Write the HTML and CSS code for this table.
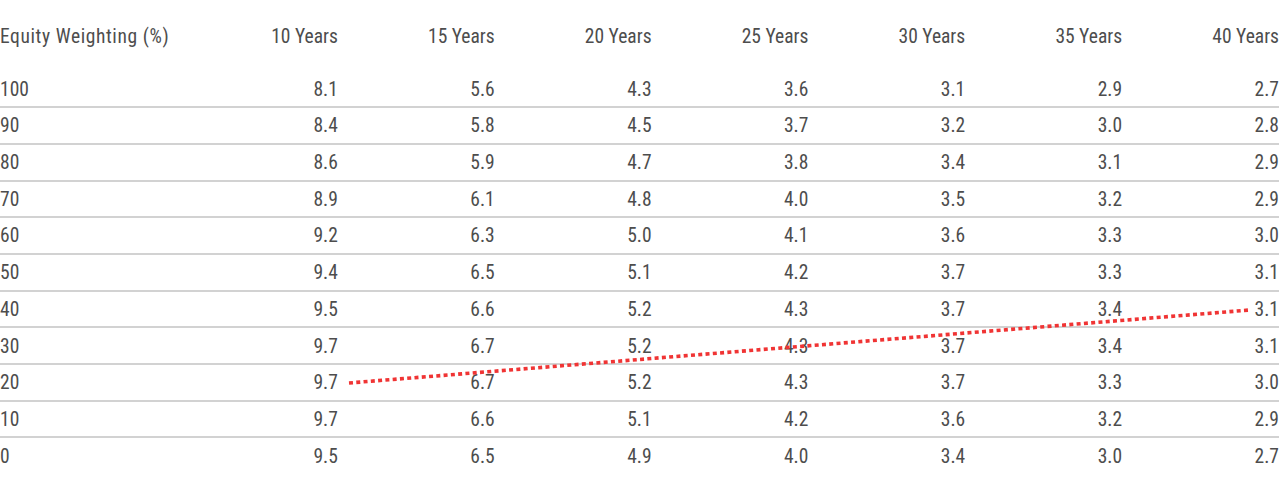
FILE: index.html
```html
<!DOCTYPE html>
<html lang="en">
<head>
<meta charset="utf-8">
<title>Safe withdrawal rates by equity weighting</title>
<link rel="stylesheet" href="styles.css">
</head>
<body>
<div class="wrap">
  <table class="rates">
    <colgroup>
      <col class="c-first">
      <col class="c-num"><col class="c-num"><col class="c-num"><col class="c-num"><col class="c-num"><col class="c-num"><col class="c-num">
    </colgroup>
    <thead>
      <tr>
        <th class="lbl">Equity Weighting (%)</th>
        <th>10 Years</th><th>15 Years</th><th>20 Years</th><th>25 Years</th><th>30 Years</th><th>35 Years</th><th>40 Years</th>
      </tr>
    </thead>
    <tbody>
      <tr><td class="lbl">100</td><td>8.1</td><td>5.6</td><td>4.3</td><td>3.6</td><td>3.1</td><td>2.9</td><td>2.7</td></tr>
      <tr><td class="lbl">90</td><td>8.4</td><td>5.8</td><td>4.5</td><td>3.7</td><td>3.2</td><td>3.0</td><td>2.8</td></tr>
      <tr><td class="lbl">80</td><td>8.6</td><td>5.9</td><td>4.7</td><td>3.8</td><td>3.4</td><td>3.1</td><td>2.9</td></tr>
      <tr><td class="lbl">70</td><td>8.9</td><td>6.1</td><td>4.8</td><td>4.0</td><td>3.5</td><td>3.2</td><td>2.9</td></tr>
      <tr><td class="lbl">60</td><td>9.2</td><td>6.3</td><td>5.0</td><td>4.1</td><td>3.6</td><td>3.3</td><td>3.0</td></tr>
      <tr><td class="lbl">50</td><td>9.4</td><td>6.5</td><td>5.1</td><td>4.2</td><td>3.7</td><td>3.3</td><td>3.1</td></tr>
      <tr><td class="lbl">40</td><td>9.5</td><td>6.6</td><td>5.2</td><td>4.3</td><td>3.7</td><td>3.4</td><td>3.1</td></tr>
      <tr><td class="lbl">30</td><td>9.7</td><td>6.7</td><td>5.2</td><td>4.3</td><td>3.7</td><td>3.4</td><td>3.1</td></tr>
      <tr><td class="lbl">20</td><td>9.7</td><td>6.7</td><td>5.2</td><td>4.3</td><td>3.7</td><td>3.3</td><td>3.0</td></tr>
      <tr><td class="lbl">10</td><td>9.7</td><td>6.6</td><td>5.1</td><td>4.2</td><td>3.6</td><td>3.2</td><td>2.9</td></tr>
      <tr><td class="lbl">0</td><td>9.5</td><td>6.5</td><td>4.9</td><td>4.0</td><td>3.4</td><td>3.0</td><td>2.7</td></tr>
    </tbody>
  </table>
  <svg class="trend" width="1280" height="486" viewBox="0 0 1280 486" aria-hidden="true">
    <line x1="349" y1="383" x2="1250" y2="310" stroke="#f03434" stroke-width="3.6" stroke-dasharray="4 3.3"/>
  </svg>
</div>
</body>
</html>
```
FILE: styles.css
```css
html, body {
  margin: 0;
  padding: 0;
  background: #ffffff;
}

body {
  font-family: "Roboto Condensed", "Liberation Sans", sans-serif;
  font-size: 19.5px;
  color: #4d4d4d;
}

.wrap {
  position: relative;
  width: 1280px;
  height: 486px;
  overflow: hidden;
}

.rates {
  width: 1279px;
  border-collapse: collapse;
  table-layout: fixed;
}

.c-first { width: 181px; }
.c-num { width: 156.85px; }

.rates th,
.rates td {
  padding: 0;
  font-weight: normal;
  text-align: right;
  white-space: nowrap;
  line-height: 22px;
}

.rates .lbl {
  text-align: left;
}

.rates thead th {
  height: 71.6px;
  vertical-align: top;
  padding-top: 26px;
  box-sizing: border-box;
}

.rates th.lbl {
  letter-spacing: 0.6px;
}

.rates tbody td {
  height: 33.2px;
  padding-top: 1.5px;
  vertical-align: middle;
}

.rates tbody tr {
  border-bottom: 2px solid #d2d2d2;
}

.rates tbody tr:last-child {
  border-bottom: none;
}

.trend {
  position: absolute;
  left: 0;
  top: 0;
  pointer-events: none;
}
```
